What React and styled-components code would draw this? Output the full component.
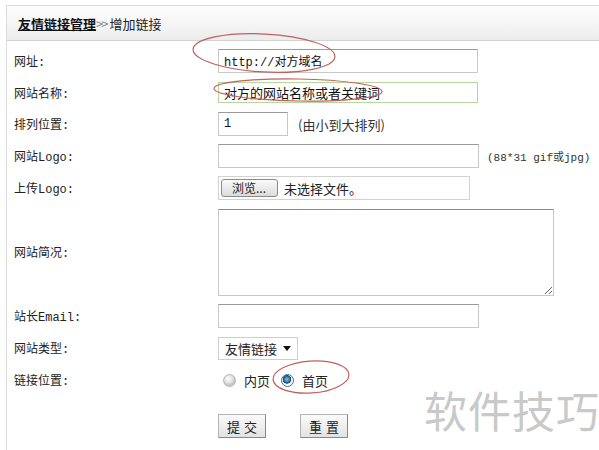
import React from "react";
import styled, { createGlobalStyle } from "styled-components";

const Global = createGlobalStyle`
  html, body { margin: 0; padding: 0; background: #fff; }
  body {
    font-family: "Liberation Mono", "Noto Sans CJK SC", monospace;
    font-size: 12px;
    color: #222;
  }
`

const Page = styled.div`
  position: relative;
  width: 599px;
  height: 450px;
  overflow: hidden;
`
const Panel = styled.div`
  margin: 5px 0 0 6px;
  border-left: 1px solid #dcdcdc;
  border-top: 1px solid #dcdcdc;
  height: 445px;
`
const Header = styled.div`
  height: 34px;
  display: flex;
  align-items: center;
  padding-left: 11px;
  background: linear-gradient(#fefefe, #ececec);
  border-bottom: 1px solid #d2d2d2;
  font-family: "Noto Sans CJK SC", sans-serif;
  font-size: 13px;
  color: #222;
`
const Crumb = styled.a`
  font-weight: bold;
  color: #111;
  text-decoration: underline;
`
const Arrows = styled.span`
  color: #888;
  letter-spacing: -2px;
  margin-right: 3px;
`
const Form = styled.div`
  padding-top: 4px;
`
const Row = styled.div`
  display: flex;
  align-items: center;
  height: ${p => p.$h || 32}px;
`
const Label = styled.div`
  width: 204px;
  padding-left: 7px;
  flex: none;
  font-size: 12px;
`
const Field = styled.div`
  display: flex;
  align-items: center;
  gap: 10px;
`
const Input = styled.div`
  box-sizing: border-box;
  width: ${p => p.$w || 260}px;
  height: ${p => p.$ht || 24}px;
  border: 1px solid ${p => (p.$green ? "#b8d79a" : "#c8c8c8")};
  border-top-color: ${p => (p.$green ? "#b8d79a" : "#9a9a9a")};
  background: #fff;
  display: flex;
  align-items: center;
  padding-left: 5px;
  font-size: ${p => p.$fs || 12}px;
  color: #111;
`
const Hint = styled.span`
  font-family: "Noto Sans CJK SC", sans-serif;
  font-size: 13px;
  color: #333;
`
const SmallHint = styled.span`
  font-size: 11px;
  color: #333;
  margin-left: -2px;
`
const FileBox = styled.div`
  box-sizing: border-box;
  width: 252px;
  height: 24px;
  border: 1px solid #d2d2d2;
  display: flex;
  align-items: center;
  padding-left: 2px;
  gap: 6px;
`
const Browse = styled.span`
  box-sizing: border-box;
  width: 57px;
  height: 18px;
  border: 1px solid #8a8a8a;
  border-radius: 3px;
  background: linear-gradient(#fafafa, #dcdcdc);
  font-family: "Noto Sans CJK SC", sans-serif;
  font-size: 12px;
  line-height: 16px;
  padding-left: 10px;
  color: #222;
`
const FileText = styled.span`
  font-family: "Noto Sans CJK SC", sans-serif;
  font-size: 13px;
`
const TextArea = styled.textarea`
  box-sizing: border-box;
  width: 336px;
  height: 87px;
  border: 1px solid #c8c8c8;
  border-top-color: #8a8a8a;
  margin: 0;
`
const Select = styled.div`
  box-sizing: border-box;
  width: 80px;
  height: 23px;
  border: 1px solid #cfcfcf;
  display: flex;
  align-items: center;
  justify-content: space-between;
  padding: 0 6px 0 6px;
  font-family: "Noto Sans CJK SC", sans-serif;
  font-size: 13px;
`
const Radio = styled.span`
  box-sizing: border-box;
  width: 13px;
  height: 13px;
  border-radius: 50%;
  border: 1px solid ${p => (p.$on ? "#3a6f95" : "#b4b4b4")};
  background: ${p =>
    p.$on
      ? "radial-gradient(circle at 45% 40%, #8fc3e6 0, #2c6e9c 3px, #1b4a6e 4px, #e8eef4 4.5px, #fff 6px)"
      : "radial-gradient(circle at 40% 35%, #fff 0, #e2e2e2 4px, #c9c9c9 6px)"};
`
const RadioItem = styled.label`
  display: flex;
  align-items: center;
  gap: 8px;
  font-family: "Noto Sans CJK SC", sans-serif;
  font-size: 13px;
  margin-left: ${p => p.$ml || 0}px;
`
const Button = styled.button`
  box-sizing: border-box;
  width: 48px;
  height: 24px;
  border: 1px solid #b4b4b4;
  border-right-color: #888;
  border-bottom-color: #888;
  background: linear-gradient(#fbfbfb, #e2e2e2);
  font-family: "Noto Sans CJK SC", sans-serif;
  font-size: 13px;
  letter-spacing: 4px;
  padding: 0 0 0 4px;
  color: #222;
`
const Buttons = styled.div`
  display: flex;
  gap: 34px;
  padding-top: 4px;
`
const Watermark = styled.div`
  position: absolute;
  left: 424px;
  top: 378px;
  font-family: "Noto Sans CJK SC", sans-serif;
  font-size: 43px;
  color: #c9c9c9;
  letter-spacing: 1px;
  white-space: nowrap;
  pointer-events: none;
`
const Marks = styled.svg`
  position: absolute;
  left: 0;
  top: 0;
  pointer-events: none;
`

export default function App() {
  return (
    <Page>
      <Global />
      <Panel>
        <Header>
          <Crumb>友情链接管理</Crumb>
          <Arrows>&gt;&gt;</Arrows>
          增加链接
        </Header>
        <Form>
          <Row>
            <Label>网址:</Label>
            <Input $ht={24}>http://对方域名</Input>
          </Row>
          <Row $h={31}>
            <Label>网站名称:</Label>
            <Input $green $ht={21} $fs={13}>
              对方的网站名称或者关键词
            </Input>
          </Row>
          <Row>
            <Label>排列位置:</Label>
            <Field>
              <Input $w={70}>1</Input>
              <Hint>(由小到大排列)</Hint>
            </Field>
          </Row>
          <Row>
            <Label>网站Logo:</Label>
            <Field>
              <Input $w={261} />
              <SmallHint>(88*31 gif或jpg)</SmallHint>
            </Field>
          </Row>
          <Row>
            <Label>上传Logo:</Label>
            <FileBox>
              <Browse>浏览...</Browse>
              <FileText>未选择文件。</FileText>
            </FileBox>
          </Row>
          <Row $h={96}>
            <Label>网站简况:</Label>
            <TextArea />
          </Row>
          <Row>
            <Label>站长Email:</Label>
            <Input $w={261} />
          </Row>
          <Row>
            <Label>网站类型:</Label>
            <Select>
              友情链接
              <svg width="8" height="5" viewBox="0 0 8 5">
                <path d="M0 0 L8 0 L4 5 Z" fill="#111" />
              </svg>
            </Select>
          </Row>
          <Row>
            <Label>链接位置:</Label>
            <RadioItem $ml={5}>
              <Radio />
              内页
            </RadioItem>
            <RadioItem $ml={11}>
              <Radio $on />
              首页
            </RadioItem>
          </Row>
          <Row $h={56}>
            <Label />
            <Buttons>
              <Button>提交</Button>
              <Button>重置</Button>
            </Buttons>
          </Row>
        </Form>
      </Panel>
      <Watermark>软件技巧</Watermark>
      <Marks width="599" height="450">
        <g fill="none" stroke="#c0605c" strokeWidth="1.2">
          <ellipse cx="264" cy="53" rx="71" ry="19" transform="rotate(3 264 53)" />
          <ellipse cx="298" cy="90" rx="84" ry="11" transform="rotate(1 298 90)" />
          <ellipse cx="311" cy="377" rx="38" ry="16" transform="rotate(-4 311 377)" />
        </g>
      </Marks>
    </Page>
  );
}
